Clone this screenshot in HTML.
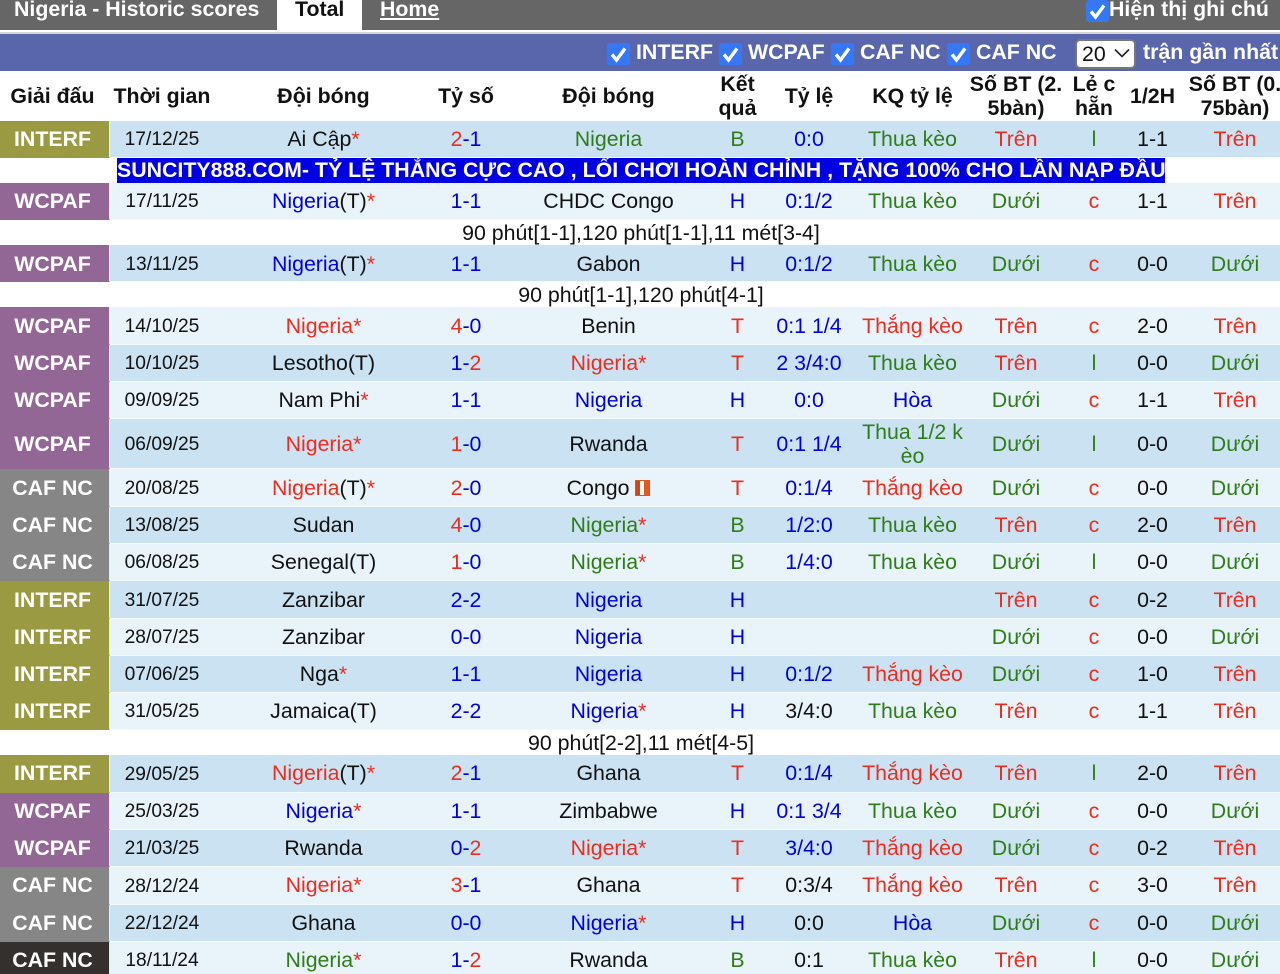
<!DOCTYPE html>
<html lang="vi"><head><meta charset="utf-8"><title>Nigeria - Historic scores</title>
<style>
html,body{margin:0;padding:0;width:1280px;height:974px;overflow:hidden;background:#fff}
body{position:relative;font-family:"Liberation Sans","Noto Sans CJK SC",sans-serif;font-size:21.33px;color:#111}
.a{position:absolute;white-space:nowrap}
.w{color:#fff;font-weight:bold}
.cb{position:absolute;width:23px;height:22px;background:#3578f6;border-radius:3px}
.cb svg{position:absolute;left:0;top:0}
table{position:absolute;left:0;top:71px;width:1286px;table-layout:fixed;border-collapse:separate;border-spacing:0}
td,th{padding:0;text-align:center;vertical-align:middle;line-height:24px;white-space:nowrap;overflow:visible}
td:nth-child(3),td:nth-child(5),td:nth-child(6),td:nth-child(8),td:nth-child(11),th:nth-child(3),th:nth-child(5),th:nth-child(6),th:nth-child(8),th:nth-child(11){padding-left:1px}
th{font-weight:bold;font-size:21.33px;color:#111}
td:first-child,th:first-child{padding-right:5px}
td:first-child{color:#fff;font-weight:bold;font-size:21.33px}
td:nth-child(2){font-size:19.2px;padding-top:2px}
.d td{background:#cbe2f3}.l td{background:#e8f3fa}
.d td,.l td{border-bottom:1px solid #f4f9fc}
.d td:first-child,.l td:first-child{border-bottom-color:transparent;border-right:1px solid #e4eef5;padding-right:4px}
.t td{padding-top:2px}.t td:nth-child(2){padding-top:3px}
.u td:not(:nth-child(2)){padding-bottom:1px}
td.i{background:#9a9a42!important}td.p{background:#926695!important}td.n{background:#868686!important}td.z{background:#33302d!important}
em{font-style:normal}
.r{color:#ee2c1e}.b{color:#0000dc}.g{color:#2f7d18}
.x td{background:#fff}
.x td.note{color:#111;font-weight:normal;font-size:21.33px;padding:0 4px 0 0}
.x td.adc{padding:0;font-size:21.33px}
.ad{background:#0000e2;color:#fff;font-weight:bold;display:block;width:1048px;height:25px;line-height:25px;margin-left:117px;font-size:21.33px;text-align:center;overflow:hidden}
.fl{display:inline-block;width:15px;height:16px;background:linear-gradient(90deg,#d2451a 0 33%,#fff 33% 59%,#e25a1c 59%);box-shadow:inset 0 0 0 1px #dd551c;vertical-align:-1px}
</style></head><body>
<div class="a" style="left:0;top:0;width:1280px;height:30px;background:#666"></div>
<div class="a" style="left:0;top:32px;width:1280px;height:2px;background:#d6d6d6"></div>
<div class="a" style="left:0;top:34px;width:1280px;height:37px;background:#5a66ab"></div>
<div class="a w" style="left:14px;top:-3px;line-height:24px">Nigeria - Historic scores</div>
<div class="a" style="left:277px;top:0;width:85px;height:32px;background:#fff"></div>
<div class="a" style="left:295px;top:-3px;line-height:24px;font-weight:bold;color:#111">Total</div>
<div class="a w" style="left:380px;top:-3px;line-height:24px;text-decoration:underline">Home</div>
<div class="cb" style="left:1086px;top:0"><svg width="23" height="22" viewBox="0 0 23 22"><path d="M5 11.5 9.5 17 18 5.5" fill="none" stroke="#fff" stroke-width="3.4"/></svg></div>
<div class="a w" style="left:1109px;top:-3px;line-height:24px">Hiện thị ghi chú</div>

<div class="cb" style="left:607px;top:43px"><svg width="23" height="22" viewBox="0 0 23 22"><path d="M5 11.5 9.5 17 18 5.5" fill="none" stroke="#fff" stroke-width="3.4"/></svg></div>
<div class="a w" style="left:636px;top:40px;line-height:24px">INTERF</div>
<div class="cb" style="left:719px;top:43px"><svg width="23" height="22" viewBox="0 0 23 22"><path d="M5 11.5 9.5 17 18 5.5" fill="none" stroke="#fff" stroke-width="3.4"/></svg></div>
<div class="a w" style="left:748px;top:40px;line-height:24px">WCPAF</div>
<div class="cb" style="left:831px;top:43px"><svg width="23" height="22" viewBox="0 0 23 22"><path d="M5 11.5 9.5 17 18 5.5" fill="none" stroke="#fff" stroke-width="3.4"/></svg></div>
<div class="a w" style="left:860px;top:40px;line-height:24px">CAF NC</div>
<div class="cb" style="left:947px;top:43px"><svg width="23" height="22" viewBox="0 0 23 22"><path d="M5 11.5 9.5 17 18 5.5" fill="none" stroke="#fff" stroke-width="3.4"/></svg></div>
<div class="a w" style="left:976px;top:40px;line-height:24px">CAF NC</div>
<div class="a" style="left:1075px;top:39px;width:57px;height:26px;background:#fff;border:2px solid #777;border-radius:5px"></div>
<div class="a" style="left:1082px;top:42px;line-height:24px;color:#111">20</div>
<svg class="a" style="left:1113px;top:47px" width="18" height="12" viewBox="0 0 18 12"><path d="M2 2.5 9 9.5 16 2.5" fill="none" stroke="#222" stroke-width="1.6"/></svg>
<div class="a w" style="left:1143px;top:40px;line-height:24px">trận gần nhất</div>

<table>
<colgroup><col style="width:110px"><col style="width:104px"><col style="width:218px"><col style="width:68px"><col style="width:216px"><col style="width:42px"><col style="width:102px"><col style="width:104px"><col style="width:104px"><col style="width:52px"><col style="width:64px"><col style="width:102px"></colgroup>
<tr style="height:50px"><th>Giải đấu</th><th>Thời gian</th><th>Đội bóng</th><th>Tỷ số</th><th>Đội bóng</th><th>Kết<br>quả</th><th>Tỷ lệ</th><th>KQ tỷ lệ</th><th>Số BT (2.<br>5bàn)</th><th>Lẻ c<br>hẵn</th><th>1/2H</th><th>Số BT (0.<br>75bàn)</th></tr>
<tr class="d" style="height:37px"><td class="i">INTERF</td><td>17/12/25</td><td>Ai Cập<em class="r">*</em></td><td><em class="r">2</em><em class="b">-1</em></td><td class="g">Nigeria</td><td class="g">B</td><td class="b">0:0</td><td class="g">Thua kèo</td><td class="r">Trên</td><td class="g">l</td><td>1-1</td><td class="r">Trên</td></tr>
<tr class="x" style="height:25px"><td class="adc" colspan="12"><span class="ad">SUNCITY888.COM- TỶ LỆ THẮNG CỰC CAO , LỐI CHƠI HOÀN CHỈNH , TẶNG 100% CHO LẦN NẠP ĐẦU</span></td></tr>
<tr class="l" style="height:37px"><td class="p">WCPAF</td><td>17/11/25</td><td><em class="b">Nigeria</em>(T)<em class="r">*</em></td><td class="b">1-1</td><td>CHDC Congo</td><td class="b">H</td><td class="b">0:1/2</td><td class="g">Thua kèo</td><td class="g">Dưới</td><td class="r">c</td><td>1-1</td><td class="r">Trên</td></tr>
<tr class="x" style="height:25px"><td class="note" colspan="12">90 phút[1-1],120 phút[1-1],11 mét[3-4]</td></tr>
<tr class="d t" style="height:37px"><td class="p">WCPAF</td><td>13/11/25</td><td><em class="b">Nigeria</em>(T)<em class="r">*</em></td><td class="b">1-1</td><td>Gabon</td><td class="b">H</td><td class="b">0:1/2</td><td class="g">Thua kèo</td><td class="g">Dưới</td><td class="r">c</td><td>0-0</td><td class="g">Dưới</td></tr>
<tr class="x" style="height:25px"><td class="note" colspan="12">90 phút[1-1],120 phút[4-1]</td></tr>
<tr class="l" style="height:38px"><td class="p">WCPAF</td><td>14/10/25</td><td class="r">Nigeria*</td><td><em class="r">4</em><em class="b">-0</em></td><td>Benin</td><td class="r">T</td><td class="b">0:1 1/4</td><td class="r">Thắng kèo</td><td class="r">Trên</td><td class="r">c</td><td>2-0</td><td class="r">Trên</td></tr>
<tr class="d" style="height:37px"><td class="p">WCPAF</td><td>10/10/25</td><td>Lesotho(T)</td><td><em class="b">1-</em><em class="r">2</em></td><td class="r">Nigeria*</td><td class="r">T</td><td class="b">2 3/4:0</td><td class="g">Thua kèo</td><td class="r">Trên</td><td class="g">l</td><td>0-0</td><td class="g">Dưới</td></tr>
<tr class="l" style="height:37px"><td class="p">WCPAF</td><td>09/09/25</td><td>Nam Phi<em class="r">*</em></td><td class="b">1-1</td><td class="b">Nigeria</td><td class="b">H</td><td class="b">0:0</td><td class="b">Hòa</td><td class="g">Dưới</td><td class="r">c</td><td>1-1</td><td class="r">Trên</td></tr>
<tr class="d" style="height:50px"><td class="p">WCPAF</td><td>06/09/25</td><td class="r">Nigeria*</td><td><em class="r">1</em><em class="b">-0</em></td><td>Rwanda</td><td class="r">T</td><td class="b">0:1 1/4</td><td class="g">Thua 1/2 k<br>èo</td><td class="g">Dưới</td><td class="g">l</td><td>0-0</td><td class="g">Dưới</td></tr>
<tr class="l" style="height:38px"><td class="n">CAF NC</td><td>20/08/25</td><td><em class="r">Nigeria</em>(T)<em class="r">*</em></td><td><em class="r">2</em><em class="b">-0</em></td><td>Congo <span class="fl"></span></td><td class="r">T</td><td class="b">0:1/4</td><td class="r">Thắng kèo</td><td class="g">Dưới</td><td class="r">c</td><td>0-0</td><td class="g">Dưới</td></tr>
<tr class="d" style="height:37px"><td class="n">CAF NC</td><td>13/08/25</td><td>Sudan</td><td><em class="r">4</em><em class="b">-0</em></td><td><em class="g">Nigeria</em><em class="r">*</em></td><td class="g">B</td><td class="b">1/2:0</td><td class="g">Thua kèo</td><td class="r">Trên</td><td class="r">c</td><td>2-0</td><td class="r">Trên</td></tr>
<tr class="l" style="height:37px"><td class="n">CAF NC</td><td>06/08/25</td><td>Senegal(T)</td><td><em class="r">1</em><em class="b">-0</em></td><td><em class="g">Nigeria</em><em class="r">*</em></td><td class="g">B</td><td class="b">1/4:0</td><td class="g">Thua kèo</td><td class="g">Dưới</td><td class="g">l</td><td>0-0</td><td class="g">Dưới</td></tr>
<tr class="d" style="height:38px"><td class="i">INTERF</td><td>31/07/25</td><td>Zanzibar</td><td class="b">2-2</td><td class="b">Nigeria</td><td class="b">H</td><td></td><td></td><td class="r">Trên</td><td class="r">c</td><td>0-2</td><td class="r">Trên</td></tr>
<tr class="l" style="height:37px"><td class="i">INTERF</td><td>28/07/25</td><td>Zanzibar</td><td class="b">0-0</td><td class="b">Nigeria</td><td class="b">H</td><td></td><td></td><td class="g">Dưới</td><td class="r">c</td><td>0-0</td><td class="g">Dưới</td></tr>
<tr class="d" style="height:37px"><td class="i">INTERF</td><td>07/06/25</td><td>Nga<em class="r">*</em></td><td class="b">1-1</td><td class="b">Nigeria</td><td class="b">H</td><td class="b">0:1/2</td><td class="r">Thắng kèo</td><td class="g">Dưới</td><td class="r">c</td><td>1-0</td><td class="r">Trên</td></tr>
<tr class="l" style="height:37px"><td class="i">INTERF</td><td>31/05/25</td><td>Jamaica(T)</td><td class="b">2-2</td><td><em class="b">Nigeria</em><em class="r">*</em></td><td class="b">H</td><td>3/4:0</td><td class="g">Thua kèo</td><td class="r">Trên</td><td class="r">c</td><td>1-1</td><td class="r">Trên</td></tr>
<tr class="x" style="height:25px"><td class="note" colspan="12">90 phút[2-2],11 mét[4-5]</td></tr>
<tr class="d u" style="height:38px"><td class="i">INTERF</td><td>29/05/25</td><td><em class="r">Nigeria</em>(T)<em class="r">*</em></td><td><em class="r">2</em><em class="b">-1</em></td><td>Ghana</td><td class="r">T</td><td class="b">0:1/4</td><td class="r">Thắng kèo</td><td class="r">Trên</td><td class="g">l</td><td>2-0</td><td class="r">Trên</td></tr>
<tr class="l" style="height:37px"><td class="p">WCPAF</td><td>25/03/25</td><td><em class="b">Nigeria</em><em class="r">*</em></td><td class="b">1-1</td><td>Zimbabwe</td><td class="b">H</td><td class="b">0:1 3/4</td><td class="g">Thua kèo</td><td class="g">Dưới</td><td class="r">c</td><td>0-0</td><td class="g">Dưới</td></tr>
<tr class="d" style="height:37px"><td class="p">WCPAF</td><td>21/03/25</td><td>Rwanda</td><td><em class="b">0-</em><em class="r">2</em></td><td class="r">Nigeria*</td><td class="r">T</td><td class="b">3/4:0</td><td class="r">Thắng kèo</td><td class="g">Dưới</td><td class="r">c</td><td>0-2</td><td class="r">Trên</td></tr>
<tr class="l u" style="height:38px"><td class="n">CAF NC</td><td>28/12/24</td><td class="r">Nigeria*</td><td><em class="r">3</em><em class="b">-1</em></td><td>Ghana</td><td class="r">T</td><td>0:3/4</td><td class="r">Thắng kèo</td><td class="r">Trên</td><td class="r">c</td><td>3-0</td><td class="r">Trên</td></tr>
<tr class="d" style="height:37px"><td class="n">CAF NC</td><td>22/12/24</td><td>Ghana</td><td class="b">0-0</td><td><em class="b">Nigeria</em><em class="r">*</em></td><td class="b">H</td><td>0:0</td><td class="b">Hòa</td><td class="g">Dưới</td><td class="r">c</td><td>0-0</td><td class="g">Dưới</td></tr>
<tr class="l" style="height:37px"><td class="z">CAF NC</td><td>18/11/24</td><td><em class="g">Nigeria</em><em class="r">*</em></td><td><em class="b">1-</em><em class="r">2</em></td><td>Rwanda</td><td class="g">B</td><td>0:1</td><td class="g">Thua kèo</td><td class="r">Trên</td><td class="g">l</td><td>0-0</td><td class="g">Dưới</td></tr>
</table>
</body></html>
